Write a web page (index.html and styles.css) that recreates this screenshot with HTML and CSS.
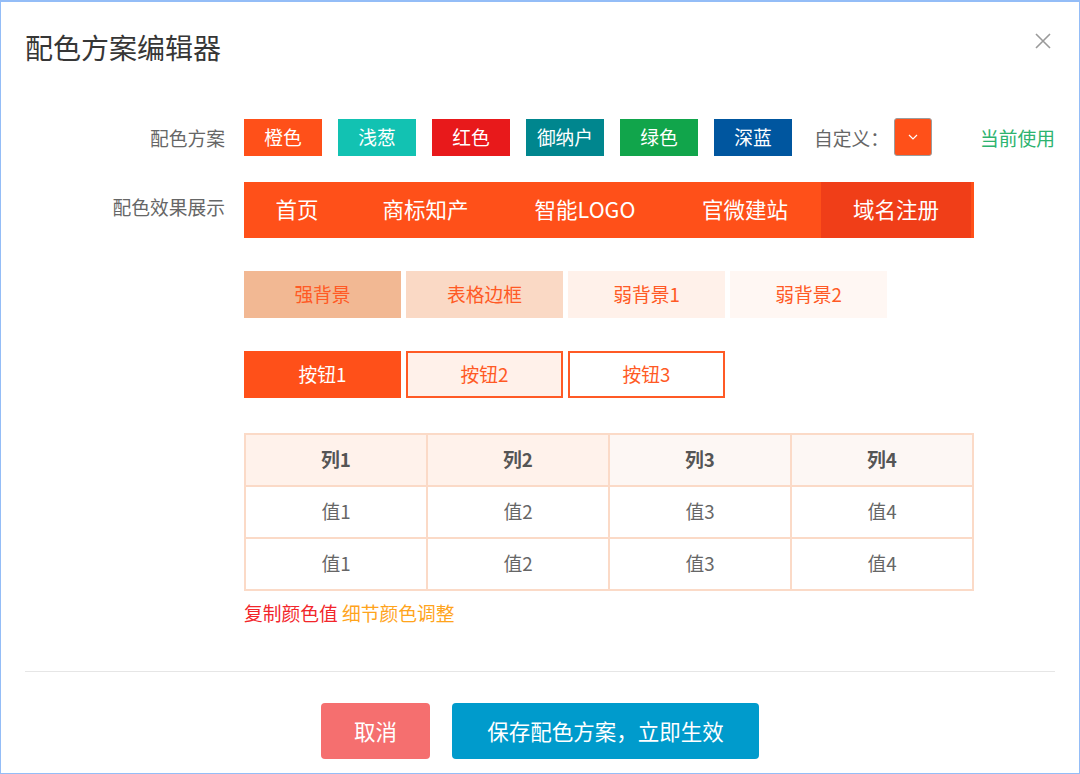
FILE: index.html
```html
<!DOCTYPE html>
<html lang="zh-CN">
<head>
<meta charset="utf-8">
<title>配色方案编辑器</title>
<link rel="stylesheet" href="styles.css">
</head>
<body>
<div class="dialog">
  <div class="header">
    <h1 class="title">配色方案编辑器</h1>
    <svg class="close" width="16" height="16" viewBox="0 0 16 16"><path d="M1 1 L15 15 M15 1 L1 15" stroke="#9a9a9a" stroke-width="1.6" fill="none"/></svg>
  </div>

  <div class="body">
    <div class="row row-scheme">
      <div class="label">配色方案</div>
      <div class="schemes">
        <span class="swatch c-orange">橙色</span>
        <span class="swatch c-teal">浅葱</span>
        <span class="swatch c-red">红色</span>
        <span class="swatch c-nando">御纳户</span>
        <span class="swatch c-green">绿色</span>
        <span class="swatch c-blue">深蓝</span>
      </div>
      <span class="custom-label">自定义：</span>
      <span class="picker"><svg width="10" height="6" viewBox="0 0 10 6"><path d="M1 1 L5 5 L9 1" stroke="#fff" stroke-width="1.2" fill="none"/></svg></span>
      <span class="current">当前使用</span>
    </div>

    <div class="row row-nav">
      <div class="label">配色效果展示</div>
      <div class="nav">
        <span class="nav-item w1">首页</span>
        <span class="nav-item w2">商标知产</span>
        <span class="nav-item w3">智能LOGO</span>
        <span class="nav-item w4">官微建站</span>
        <span class="nav-item w5 active">域名注册</span>
      </div>
    </div>

    <div class="block tiles">
      <span class="tile t-strong">强背景</span>
      <span class="tile t-border">表格边框</span>
      <span class="tile t-weak1">弱背景1</span>
      <span class="tile t-weak2">弱背景2</span>
    </div>

    <div class="block tiles buttons">
      <span class="tile b1">按钮1</span>
      <span class="tile b2">按钮2</span>
      <span class="tile b3">按钮3</span>
    </div>

    <div class="block grid-table">
      <div class="cell th th-a">列1</div>
      <div class="cell th th-a">列2</div>
      <div class="cell th th-b">列3</div>
      <div class="cell th th-b">列4</div>
      <div class="cell">值1</div>
      <div class="cell">值2</div>
      <div class="cell">值3</div>
      <div class="cell">值4</div>
      <div class="cell">值1</div>
      <div class="cell">值2</div>
      <div class="cell">值3</div>
      <div class="cell">值4</div>
    </div>

    <div class="block links">
      <span class="link-red">复制颜色值</span> <span class="link-orange">细节颜色调整</span>
    </div>
  </div>

  <div class="divider"></div>

  <div class="footer">
    <span class="btn btn-cancel">取消</span>
    <span class="btn btn-save">保存配色方案，立即生效</span>
  </div>
</div>
</body>
</html>
```

FILE: styles.css
```css
* { box-sizing: border-box; }
html, body { margin: 0; padding: 0; background: #fff; }
body { font-family: "Noto Sans CJK SC", "Noto Sans", sans-serif; }

.dialog {
  width: 1080px;
  height: 774px;
  border: 1px solid #94bdf7;
  border-top-width: 2px;
  background: #fff;
}

.header {
  display: flex;
  align-items: flex-start;
  padding: 26px 28px 0 24px;
}
.title {
  margin: 0;
  font-size: 28px;
  line-height: 38px;
  padding-bottom: 2px;
  font-weight: 400;
  color: #363636;
}
.close { margin-left: auto; margin-top: 5px; }

.body { padding: 0 24px; }

.row { display: flex; align-items: center; }
.label {
  width: 200px;
  margin-right: 19px;
  text-align: right;
  font-size: 18.75px;
  color: #666;
  flex-shrink: 0;
}

.row-scheme { margin-top: 50px; height: 38px; }
.schemes { display: flex; gap: 16px; }
.swatch {
  width: 78px;
  height: 37px;
  padding-bottom: 1px;
  display: flex;
  align-items: center;
  justify-content: center;
  color: #fff;
  font-size: 18.75px;
}
.c-orange { background: #ff5019; }
.c-teal { background: #12c2b2; }
.c-red { background: #e8191b; }
.c-nando { background: #00868e; }
.c-green { background: #11a54b; }
.c-blue { background: #00569f; }

.custom-label { margin-left: 22px; font-size: 18.75px; color: #666; }
.picker {
  width: 38px;
  height: 38px;
  margin-left: 5px;
  border: 1px solid #9c9c9c;
  border-radius: 3px;
  background: #ff5019;
  display: flex;
  align-items: center;
  justify-content: center;
}
.current { margin-left: auto; font-size: 18.75px; color: #2db36f; }

.row-nav { margin-top: 26px; align-items: flex-start; }
.row-nav .label { line-height: 50px; }
.nav {
  width: 730px;
  height: 56px;
  display: flex;
  background: #ff5019;
}
.nav-item {
  display: flex;
  align-items: center;
  justify-content: center;
  padding-bottom: 3px;
  color: #fff;
  font-size: 21.5px;
}
.w1 { width: 106px; }
.w2 { width: 151px; }
.w3 { width: 168px; }
.w4 { width: 152px; }
.w5 { width: 150px; }
.nav-item.active { background: #f03e18; }

.block { margin-left: 219px; }
.tiles { display: flex; gap: 5px; margin-top: 33px; }
.tile {
  width: 157px;
  height: 47px;
  padding-bottom: 2px;
  display: flex;
  align-items: center;
  justify-content: center;
  font-size: 18.75px;
  color: #ff5a25;
}
.t-strong { background: #f2b893; }
.t-border { background: #fad9c5; }
.t-weak1 { background: #fff1ea; }
.t-weak2 { background: #fff7f3; }
.b1 { background: #ff5019; color: #fff; }
.b2 { background: #fff1ea; border: 2px solid #ff5a25; }
.b3 { background: #fff; border: 2px solid #ff5a25; }

.grid-table {
  margin-top: 35px;
  width: 730px;
  display: grid;
  grid-template-columns: repeat(4, 1fr);
  border-top: 2px solid #fbdac7;
  border-left: 2px solid #fbdac7;
}
.cell {
  height: 52px;
  padding-bottom: 4px;
  border-right: 2px solid #fbdac7;
  border-bottom: 2px solid #fbdac7;
  display: flex;
  align-items: center;
  justify-content: center;
  font-size: 18.75px;
  color: #666;
}
.th { font-weight: 700; color: #555; }
.th-a { background: #fff2eb; }
.th-b { background: #fdf7f4; }

.links { margin-top: 10px; font-size: 18.75px; line-height: 24px; }
.link-red { color: #f2262b; }
.link-orange { color: #ffa41c; }

.divider {
  margin: 46px 24px 0;
  height: 1px;
  background: #e6e6e6;
}

.footer {
  display: flex;
  justify-content: center;
  gap: 22px;
  margin-top: 31px;
}
.btn {
  height: 56px;
  padding-bottom: 2px;
  border-radius: 4px;
  display: flex;
  align-items: center;
  justify-content: center;
  color: #fff;
  font-size: 21.5px;
}
.btn-cancel { width: 109px; background: #f56f6f; }
.btn-save { width: 307px; background: #009bcc; }
```
